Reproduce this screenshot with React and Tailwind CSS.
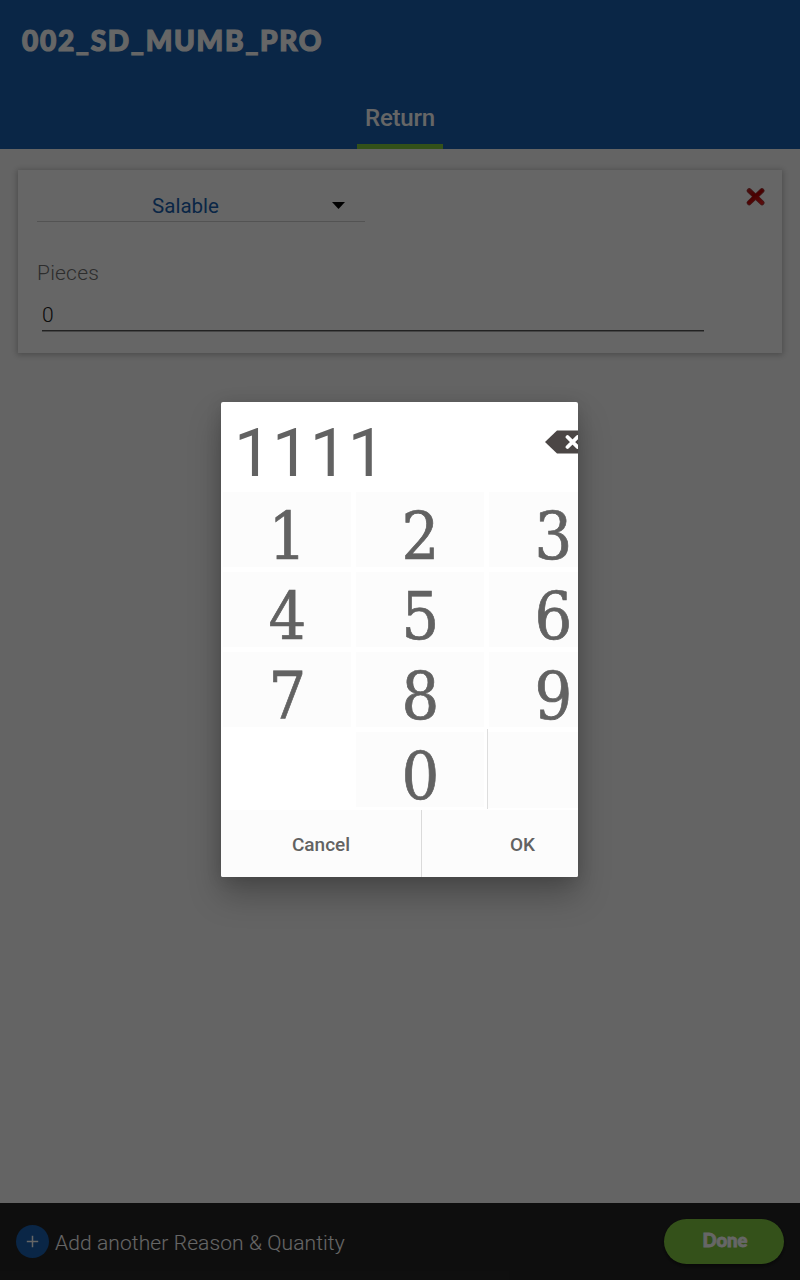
import React from "react";

const ROWS = [
  ["1", "2", "3"],
  ["4", "5", "6"],
  ["7", "8", "9"],
];

function Key({ label }) {
  return (
    <button className="h-20 w-[133px] pt-[3px] pr-[3px] pb-0.5 pl-0.5">
      <span className="flex h-full w-full items-center justify-center bg-[#fcfcfc] pt-[14px] pl-px font-['DejaVu_Serif_Condensed','DejaVu_Serif',serif] text-[66px] leading-none text-[#626262] [font-stretch:condensed] [-webkit-text-stroke:0.7px_#626262]">
        {label}
      </span>
    </button>
  );
}

function Header() {
  return (
    <header className="flex h-[149px] flex-col items-center justify-between bg-[#195faf]">
      <h1 className="w-full pt-[23px] pl-[22px] font-[Lato,sans-serif] text-[28px] leading-[34px] font-black tracking-[1.7px] text-white [-webkit-text-stroke:1.2px_white] [paint-order:stroke_fill]">
        002_SD_MUMB_PRO
      </h1>
      <div className="flex h-[49px] w-[86px] flex-col items-center justify-between">
        <span className="pt-1 text-2xl leading-7 font-medium tracking-[-0.2px] text-white">Return</span>
        <span className="h-[5px] w-full bg-[#7fcb3f]" />
      </div>
    </header>
  );
}

function ReturnCard() {
  return (
    <section className="mx-[18px] mt-[21px] flex h-[183px] justify-between bg-white shadow-[0_1px_6px_1px_rgba(0,0,0,0.25)]">
      <div className="pl-[19px]">
        <div className="flex h-[52px] w-[328px] items-center border-b border-[#d0d0d0] pt-[19px]">
          <span className="w-[297px] pt-0.5 text-center text-[20.5px] leading-6 text-[#195faf]">Salable</span>
          <svg className="ml-[-2px] h-[7px] w-[13px]" viewBox="0 0 13 7">
            <path d="M0 0h13L6.5 7z" fill="#000" />
          </svg>
        </div>
        <div className="pt-[39px] text-[21px] leading-6 font-light tracking-[0.2px] text-[#707070]">Pieces</div>
        <div className="mt-[17px] ml-[5px] h-[29px] w-[662px] border-b border-[#555] pt-px text-[21px] leading-6 font-light text-[#202020] shadow-[0_1px_0_#b0b0b0]">
          0
        </div>
      </div>
      <svg className="mt-[17px] mr-[17px] h-5 w-5" viewBox="0 0 20 20">
        <defs>
          <linearGradient id="close" x1="0" y1="0" x2="0.6" y2="1">
            <stop offset="0" stopColor="#b83030" />
            <stop offset="0.5" stopColor="#b60000" />
            <stop offset="1" stopColor="#e02020" />
          </linearGradient>
        </defs>
        <path d="m4.2 3.6 12.8 12.2M17 3.6 4.2 15.8" stroke="#a04040" strokeWidth="5" strokeLinecap="round" />
        <path d="M4.5 1.4 10.6 7l6-5.6 2.4 2.4-5.4 5.8 5.4 5.8-2.4 2.6-6-5.8-6.1 5.8L2 15.4l5.6-5.8L2 3.8z" fill="url(#close)" />
      </svg>
    </section>
  );
}

function Footer() {
  return (
    <footer className="flex h-[77px] items-center justify-between bg-[#252525] pr-4 pl-4">
      <div className="flex items-center">
        <svg className="h-[33px] w-[33px]" viewBox="0 0 33 33">
          <circle cx="16.5" cy="16.5" r="16.5" fill="#195faf" />
          <path d="M16.5 10.8v11.4M10.8 16.5h11.4" stroke="#fff" strokeWidth="1.5" />
        </svg>
        <span className="pt-0.5 pl-1.5 text-[21px] leading-6 font-light tracking-[0.1px] text-white">
          Add another Reason &amp; Quantity
        </span>
      </div>
      <button className="h-[45px] w-[120px] rounded-full bg-[#82cb41] pb-[3px] pl-0.5 font-[Lato,sans-serif] text-[18.5px] leading-6 font-black text-white shadow-[0_2px_4px_rgba(0,0,0,0.5)] [-webkit-text-stroke:0.8px_white] [paint-order:stroke_fill]">
        Done
      </button>
    </footer>
  );
}

function QuantityDialog() {
  return (
    <div className="h-[475px] w-[357px] overflow-hidden rounded-[2px] bg-white text-[#626262] shadow-[0_18px_32px_rgba(0,0,0,0.26),0_2px_16px_rgba(0,0,0,0.12)]">
      <div className="w-[400px]">
        <div className="flex h-[87px] justify-between">
          <span className="pt-[11px] pl-[13px] text-[67.5px] leading-[80px]">1111</span>
          <svg className="mt-7 mr-[34px] h-6 w-[42px]" viewBox="0 0 42 24">
            <path d="M0 12 12 .5h30v23H12z" fill="#4b4645" />
            <path d="m22.5 7 10 10m0-10-10 10" stroke="#fff" strokeWidth="3.8" strokeLinecap="round" />
          </svg>
        </div>
        {ROWS.map((row) => (
          <div key={row[0]} className="flex">
            {row.map((n) => (
              <Key key={n} label={n} />
            ))}
          </div>
        ))}
        <div className="flex">
          <div className="h-20 w-[133px]" />
          <Key label="0" />
          <div className="h-20 w-[134px] border-l border-[#dedede] pt-[3px] pb-px">
            <div className="h-full bg-[#fcfcfc]" />
          </div>
        </div>
        <div className="flex h-[68px] pt-px text-[19px] font-medium">
          <button className="w-[200px] bg-[#fcfcfc] pt-[3px]">Cancel</button>
          <button className="w-[200px] border-l border-[#dadada] bg-[#fcfcfc] pt-[3px] pl-0.5">OK</button>
        </div>
      </div>
    </div>
  );
}

export default function App() {
  return (
    <div className="relative flex h-[1280px] w-[800px] flex-col overflow-hidden bg-[#fafafa] font-[Roboto,sans-serif]">
      <Header />
      <main className="flex-1">
        <ReturnCard />
      </main>
      <Footer />
      <div className="absolute inset-0 flex items-center justify-center bg-black/60 pr-px pb-px">
        <QuantityDialog />
      </div>
    </div>
  );
}
